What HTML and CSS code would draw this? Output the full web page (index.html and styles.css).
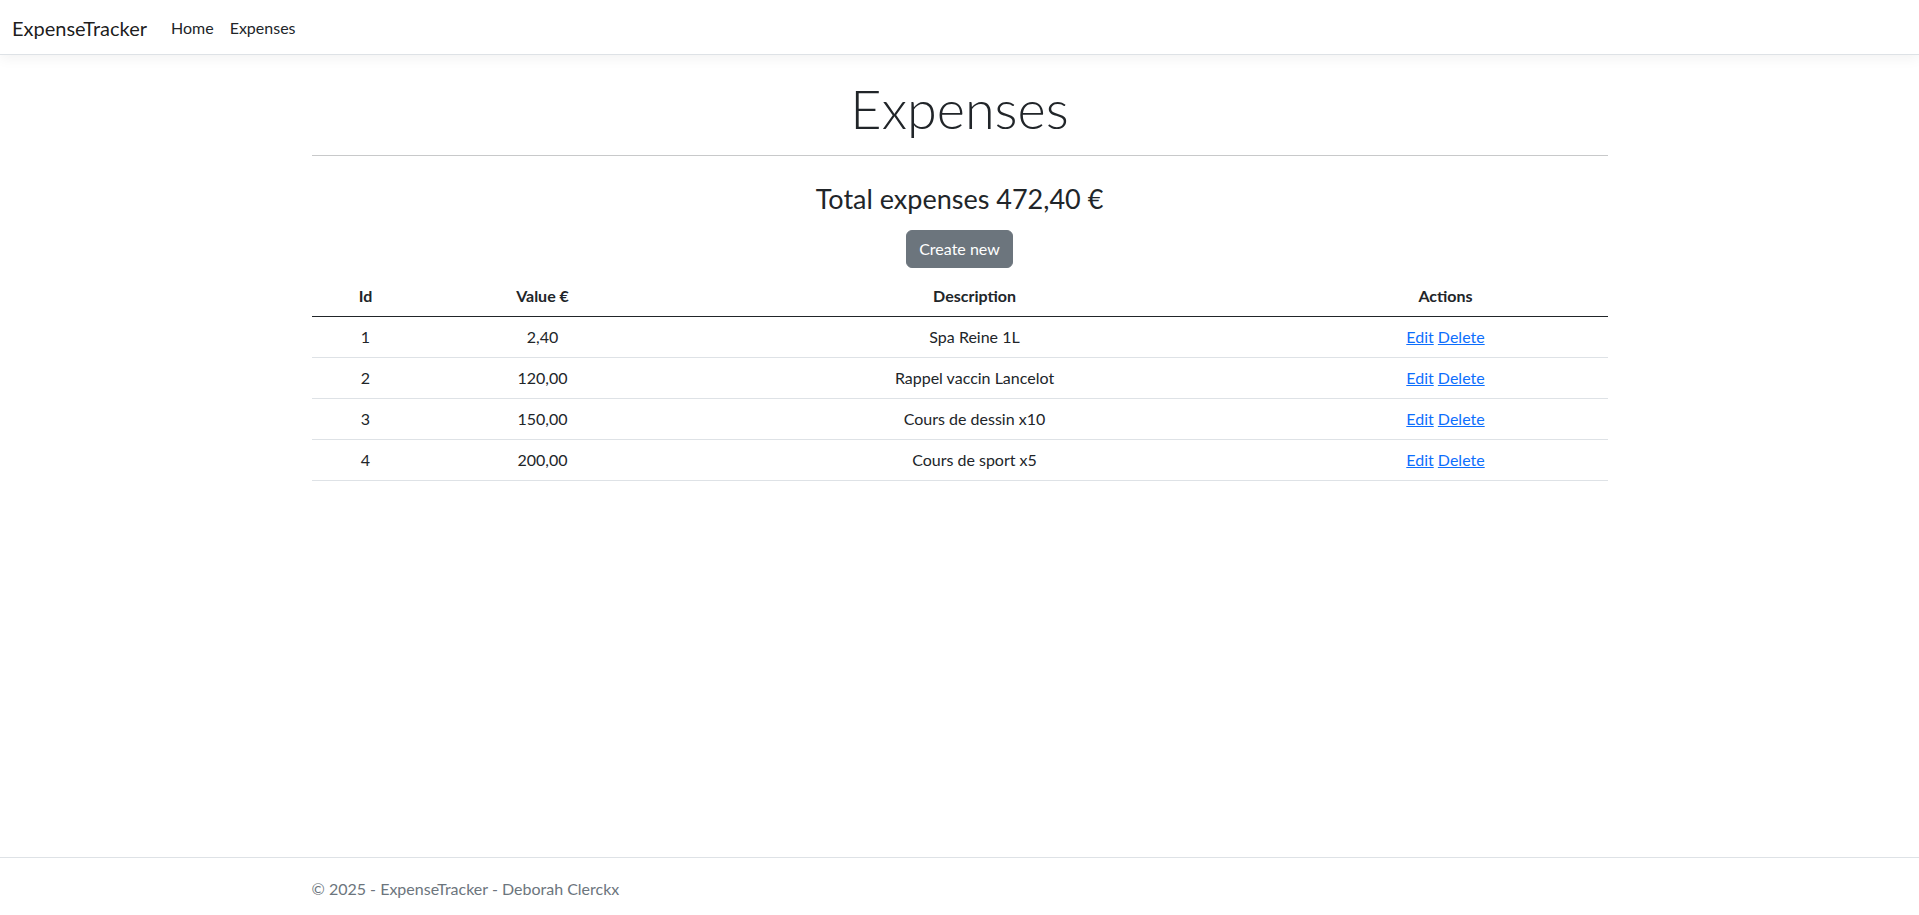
FILE: index.html
```html
<!DOCTYPE html>
<html lang="en">
<head>
<meta charset="utf-8">
<title>Expenses - ExpenseTracker</title>
<link rel="stylesheet" href="styles.css">
</head>
<body>
<header class="navbar">
  <a class="brand" href="#">ExpenseTracker</a>
  <nav class="nav">
    <a class="nav-link" href="#">Home</a>
    <a class="nav-link" href="#">Expenses</a>
  </nav>
</header>
<main class="main">
  <div class="container">
    <h1 class="title">Expenses</h1>
    <hr class="rule">
    <h3 class="total">Total expenses 472,40 €</h3>
    <div class="actions-top"><a class="btn" href="#">Create new</a></div>
    <table class="table">
      <colgroup>
        <col class="c-id"><col class="c-val"><col class="c-desc"><col class="c-act">
      </colgroup>
      <thead>
        <tr><th>Id</th><th>Value €</th><th>Description</th><th>Actions</th></tr>
      </thead>
      <tbody>
        <tr><td>1</td><td>2,40</td><td>Spa Reine 1L</td><td><a href="#">Edit</a> <a href="#">Delete</a></td></tr>
        <tr><td>2</td><td>120,00</td><td>Rappel vaccin Lancelot</td><td><a href="#">Edit</a> <a href="#">Delete</a></td></tr>
        <tr><td>3</td><td>150,00</td><td>Cours de dessin x10</td><td><a href="#">Edit</a> <a href="#">Delete</a></td></tr>
        <tr><td>4</td><td>200,00</td><td>Cours de sport x5</td><td><a href="#">Edit</a> <a href="#">Delete</a></td></tr>
      </tbody>
    </table>
  </div>
</main>
<footer class="footer">
  <div class="container">© 2025 - ExpenseTracker - Deborah Clerckx</div>
</footer>
</body>
</html>
```
FILE: styles.css
```css
* { box-sizing: border-box; }
html, body { margin: 0; }
body {
  font-family: Lato, "Noto Sans", sans-serif;
  font-size: 16px;
  line-height: 1.5;
  color: #212529;
  background: #fff;
  min-height: 100vh;
  display: flex;
  flex-direction: column;
}
.navbar {
  height: 55px;
  display: flex;
  align-items: center;
  padding: 1px 12px 0;
  border-bottom: 1px solid #dee2e6;
  box-shadow: 0 4px 12px rgba(0,0,0,.05);
  background: #fff;
}
.brand {
  font-size: 20px;
  line-height: 30px;
  color: rgba(0,0,0,.9);
  text-decoration: none;
  margin-right: 16px;
}
.nav { display: flex; }
.nav-link {
  color: #212529;
  text-decoration: none;
  padding: 8px 8px;
  line-height: 24px;
}
.main { flex: 1; padding-top: 20px; }
.container {
  width: 1320px;
  margin: 0 auto;
  padding: 0 12px;
}
.title {
  margin: 0;
  text-align: center;
  font-size: 54px;
  font-weight: 300;
  line-height: 67px;
}
.rule {
  margin: 13px 0 0;
  border: 0;
  border-top: 1px solid #c8c9ca;
  height: 0;
}
.total {
  margin: 26px 0 0;
  text-align: center;
  font-size: 27px;
  font-weight: 400;
  line-height: 34px;
}
.actions-top {
  display: flex;
  justify-content: center;
  margin-top: 14px;
}
.btn {
  display: inline-block;
  height: 38px;
  padding: 6px 12px;
  border: 1px solid #6c757d;
  border-radius: 6px;
  background: #6c757d;
  color: #fff;
  text-decoration: none;
  font-size: 16px;
  line-height: 24px;
}
.table {
  width: 100%;
  margin-top: 8px;
  border-collapse: collapse;
  table-layout: fixed;
  text-align: center;
}
.c-id { width: 108px; }
.c-val { width: 246px; }
.c-desc { width: 618px; }
.c-act { width: 324px; }
.table th, .table td {
  padding: 8px;
  line-height: 24px;
  border-bottom: 1px solid #dee2e6;
}
.table th { font-weight: 700; border-bottom: 1px solid #212529; }
.table a { color: #0d6efd; text-decoration: underline; }
.footer {
  border-top: 1px solid #dee2e6;
  padding: 6px 0 1px;
  line-height: 50px;
  color: #6c757d;
  white-space: nowrap;
}
```
